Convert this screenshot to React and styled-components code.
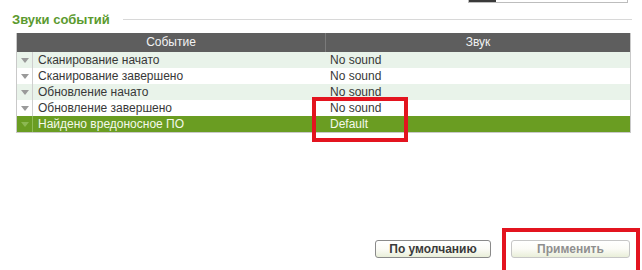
import React from "react";
import styled, { createGlobalStyle } from "styled-components";

const Global = createGlobalStyle`
  html, body { margin: 0; padding: 0; background: #fff; }
  body { font-family: "Liberation Sans", Arial, sans-serif; }
`;

const Page = styled.div`
  position: relative;
  width: 642px;
  height: 270px;
  overflow: hidden;
  display: flex;
  flex-direction: column;
  background: #fff;
`;

const TopBar = styled.div`
  display: flex;
  justify-content: flex-end;
  padding-right: 14px;
  height: 3px;
`;

const SearchStub = styled.div`
  width: 158px;
  height: 2px;
  border: 1px solid #bdbdbd;
  border-top: none;
  display: flex;
`;

const SearchKnob = styled.div`
  width: 27px;
  background: #3a3a3a;
`;

const SectionHead = styled.div`
  display: flex;
  align-items: center;
  padding: 7px 10px 0 12px;
  height: 18px;
`;

const Title = styled.div`
  color: #5b9a2f;
  font-weight: bold;
  font-size: 13px;
  white-space: nowrap;
`;

const Rule = styled.div`
  flex: 1;
  height: 1px;
  background: #d8d8d8;
  margin-left: 13px;
  margin-top: 1px;
`;

const Table = styled.div`
  margin: 5px 11px 0 16px;
  border: 1px solid #c9c9c9;
  border-top: none;
  display: grid;
  grid-template-columns: 16px 293px 1fr;
  font-size: 12px;
`;

const HeadCell = styled.div`
  grid-column: ${(p) => p.$span};
  background: #5e5e5e;
  color: #f2f2f2;
  height: 19px;
  line-height: 19px;
  text-align: center;
  border-right: ${(p) => (p.$divider ? "1px solid #7a7a7a" : "none")};
`;

const rowBg = (p) => (p.$selected ? "#6a9d22" : p.$alt ? "#e9f3ea" : "#ffffff");

const ArrowCell = styled.div`
  background: ${rowBg};
  height: 16px;
  border-right: 1px solid ${(p) => (p.$selected ? "#8fbb55" : "#cfcfcf")};
  display: flex;
  align-items: center;
  justify-content: center;
`;

const Cell = styled.div`
  background: ${rowBg};
  height: 16px;
  line-height: 16px;
  padding-left: ${(p) => p.$pad}px;
  color: ${(p) => (p.$selected ? "#f4f9ea" : "#383838")};
  white-space: nowrap;
`;

const Spacer = styled.div`
  flex: 1;
`;

const Buttons = styled.div`
  display: flex;
  justify-content: flex-end;
  gap: 20px;
  padding: 0 12px 12px 0;
`;

const Button = styled.button`
  width: ${(p) => p.$w}px;
  height: 18px;
  padding: 0;
  border-radius: 3px;
  border: 1px solid ${(p) => (p.disabled ? "#c6c6c6" : "#8a8a8a")};
  background: linear-gradient(#ffffff 0%, #fbfbf6 50%, #e9efd9 100%);
  font-family: "Liberation Sans", Arial, sans-serif;
  font-weight: bold;
  font-size: 12px;
  color: ${(p) => (p.disabled ? "#8f8f8f" : "#3a3a3a")};
`;

const Mark = styled.div`
  position: absolute;
  border: 4px solid #e3141f;
  box-sizing: border-box;
  left: ${(p) => p.$x}px;
  top: ${(p) => p.$y}px;
  width: ${(p) => p.$w}px;
  height: ${(p) => p.$h}px;
`;

const Arrow = ({ selected }) => (
  <svg width="8" height="5" viewBox="0 0 8 5">
    <path d="M0 0 H8 L4 5 Z" fill={selected ? "#8cb852" : "#9a9a9a"} />
  </svg>
);

const rows = [
  ["Сканирование начато", "No sound"],
  ["Сканирование завершено", "No sound"],
  ["Обновление начато", "No sound"],
  ["Обновление завершено", "No sound"],
  ["Найдено вредоносное ПО", "Default"],
];

export default function App() {
  return (
    <>
      <Global />
      <Page>
        <TopBar>
          <SearchStub>
            <SearchKnob />
          </SearchStub>
        </TopBar>
        <SectionHead>
          <Title>Звуки событий</Title>
          <Rule />
        </SectionHead>
        <Table>
          <HeadCell $span="1 / 3" $divider>Событие</HeadCell>
          <HeadCell $span="3 / 4">Звук</HeadCell>
          {rows.map(([ev, snd], i) => {
            const selected = i === 4;
            const alt = i % 2 === 0;
            return (
              <React.Fragment key={ev}>
                <ArrowCell $selected={selected} $alt={alt}>
                  <Arrow selected={selected} />
                </ArrowCell>
                <Cell $selected={selected} $alt={alt} $pad={5}>{ev}</Cell>
                <Cell $selected={selected} $alt={alt} $pad={4}>{snd}</Cell>
              </React.Fragment>
            );
          })}
        </Table>
        <Spacer />
        <Buttons>
          <Button $w={116}>По умолчанию</Button>
          <Button $w={119} disabled>Применить</Button>
        </Buttons>
        <Mark $x={312} $y={97} $w={96} $h={45} />
        <Mark $x={502} $y={228} $w={138} $h={46} />
      </Page>
    </>
  );
}
